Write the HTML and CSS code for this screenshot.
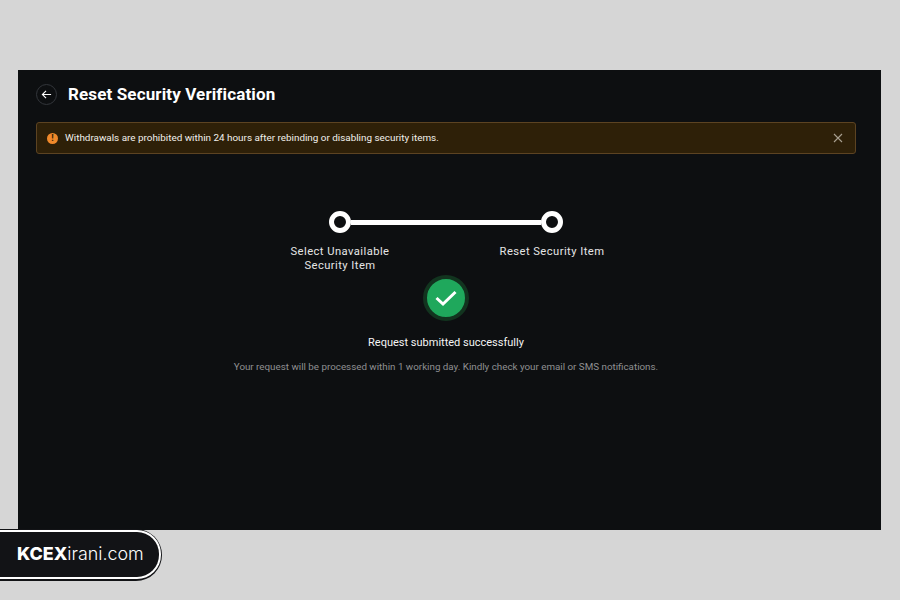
FILE: index.html
```html
<!DOCTYPE html>
<html lang="en">
<head>
  <meta charset="UTF-8">
  <title>Reset Security Verification</title>
  <link rel="stylesheet" href="styles.css">
</head>
<body>
  <div class="panel">
    <div class="header">
      <div class="back">
        <svg width="11" height="11" viewBox="0 0 12 12"><path d="M11 6H1.5M5.5 2 1.5 6l4 4" fill="none" stroke="#fff" stroke-width="1.2"/></svg>
      </div>
      <div class="title">Reset Security Verification</div>
    </div>
    <div class="alert">
      <div class="alert-icon">!</div>
      <div class="alert-text">Withdrawals are prohibited within 24 hours after rebinding or disabling security items.</div>
      <svg class="alert-close" width="10" height="10" viewBox="0 0 10 10"><path d="M1 1l8 8M9 1 1 9" stroke="#a89f90" stroke-width="1.1"/></svg>
    </div>
    <div class="stepper">
      <div class="step-track">
        <div class="dot"></div>
        <div class="line"></div>
        <div class="dot"></div>
      </div>
      <div class="step-labels">
        <div class="step-label">Select Unavailable<br>Security Item</div>
        <div class="step-label">Reset Security Item</div>
      </div>
    </div>
    <div class="result">
      <div class="check">
        <svg width="24" height="18" viewBox="0 0 24 18"><path d="M2.5 9 9 15 21.5 3" fill="none" stroke="#fff" stroke-width="3"/></svg>
      </div>
      <div class="result-title">Request submitted successfully</div>
      <div class="result-note">Your request will be processed within 1 working day. Kindly check your email or SMS notifications.</div>
    </div>
  </div>
  <div class="badge"><div class="badge-inner"><b>KCEX</b>irani.com</div></div>
</body>
</html>
```

FILE: styles.css
```css
html, body { height: 100%; }
body {
  margin: 0;
  background: #d6d6d6;
  font-family: "Roboto", "Liberation Sans", sans-serif;
  color: #fff;
  overflow: hidden;
}
.panel {
  box-sizing: border-box;
  width: 863px;
  height: 460px;
  margin: 70px 0 0 18px;
  padding: 14px 25px 0 18px;
  background: #0d0f11;
}
.header { display: flex; align-items: center; gap: 11px; height: 21px; }
.back {
  box-sizing: border-box;
  width: 21px;
  height: 21px;
  border: 1px solid #33363b;
  border-radius: 50%;
  display: flex;
  align-items: center;
  justify-content: center;
}
.title { padding-bottom: 2px; font-size: 17px; font-weight: 700; letter-spacing: 0.13px; }
.alert {
  box-sizing: border-box;
  height: 32px;
  margin-top: 17px;
  padding: 0 12px 0 10px;
  display: flex;
  align-items: center;
  background: #2e2008;
  border: 1px solid #5c4322;
  border-radius: 3px;
}
.alert-icon {
  width: 11px;
  height: 11px;
  border-radius: 50%;
  background: #f0892b;
  color: #2e2008;
  font-size: 9px;
  font-weight: 700;
  line-height: 11px;
  text-align: center;
}
.alert-text { flex: 1; margin-left: 7px; padding-bottom: 1px; font-size: 9.9px; color: #f2f0ec; }
.stepper { width: 336px; margin: 57px auto 0; }
.step-track { display: flex; align-items: center; padding: 0 51px; }
.dot {
  width: 12px;
  height: 12px;
  border: 5px solid #fff;
  border-radius: 50%;
  background: #0d0f11;
  flex: none;
}
.line { flex: 1; height: 5px; background: #fff; }
.step-labels { display: flex; justify-content: space-between; margin-top: 12px; }
.step-label {
  width: 124px;
  font-size: 11.2px;
  line-height: 14px;
  letter-spacing: 0.45px;
  text-align: center;
  color: #e6e6e6;
}
.result { display: flex; flex-direction: column; align-items: center; margin-top: 2px; }
.check {
  box-sizing: border-box;
  width: 46px;
  height: 46px;
  border: 4px solid #12341f;
  border-radius: 50%;
  background: #1fa85c;
  display: flex;
  align-items: center;
  justify-content: center;
}
.result-title { margin-top: 15px; font-size: 11px; line-height: 14px; color: #f4f4f4; }
.result-note { margin-top: 10px; font-size: 9.8px; line-height: 14px; color: #8f9092; }
.badge {
  position: absolute;
  left: 0;
  top: 529px;
  box-sizing: border-box;
  width: 162px;
  height: 52px;
  padding: 1px 1px 2px 0;
  background: #121316;
  border-radius: 0 26px 26px 0;
}
.badge-inner {
  box-sizing: border-box;
  height: 49px;
  padding: 1px 0 0 17px;
  border: 2.5px solid #fff;
  border-left: 0;
  border-radius: 0 24px 24px 0;
  font-family: "Inter", sans-serif;
  font-size: 17.9px;
  font-weight: 300;
  line-height: 41px;
}
.badge-inner b { font-weight: 800; }
```
